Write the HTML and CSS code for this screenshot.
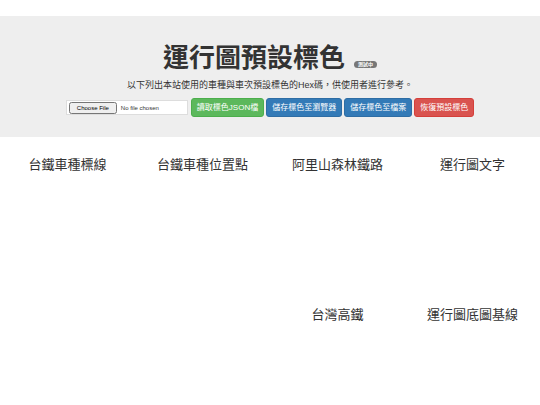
FILE: index.html
```html
<!DOCTYPE html>
<html lang="zh-Hant">
<head>
<meta charset="utf-8">
<title>運行圖預設標色</title>
<link rel="stylesheet" href="styles.css">
</head>
<body>
<div class="topgap"></div>
<header class="jumbotron">
  <h1 class="title">運行圖預設標色<span class="badge">測試中</span></h1>
  <p class="lead">以下列出本站使用的車種與車次預設標色的Hex碼，供使用者進行參考。</p>
  <div class="actions">
    <label class="file-box"><input type="file" class="file-input"></label>
    <button class="btn btn-green">讀取標色JSON檔</button>
    <button class="btn btn-blue">儲存標色至瀏覽器</button>
    <button class="btn btn-blue">儲存標色至檔案</button>
    <button class="btn btn-red">恢復預設標色</button>
  </div>
</header>
<main class="grid">
  <h2 class="col-title c1">台鐵車種標線</h2>
  <h2 class="col-title c2">台鐵車種位置點</h2>
  <h2 class="col-title c3">阿里山森林鐵路</h2>
  <h2 class="col-title c4">運行圖文字</h2>
  <h2 class="col-title c3 r2">台灣高鐵</h2>
  <h2 class="col-title c4 r2">運行圖底圖基線</h2>
</main>
</body>
</html>
```
FILE: styles.css
```css
html, body {
  margin: 0;
  padding: 0;
  background: #fff;
  color: #333;
  font-family: "Liberation Sans", "Noto Sans CJK TC", sans-serif;
}
.topgap { height: 16px; }
.jumbotron {
  background: #eeeeee;
  padding: 26px 0 20px;
  text-align: center;
}
.title {
  margin: 0;
  font-size: 26px;
  line-height: 32px;
  font-weight: 700;
  color: #333;
}
.badge {
  display: inline-block;
  vertical-align: 1px;
  margin-left: 9px;
  background: #777;
  color: #fff;
  font-size: 5px;
  line-height: 7px;
  padding: 0 4px;
  border-radius: 4px;
  font-weight: 700;
}
.lead {
  margin: 5px 0 0;
  font-size: 9px;
  line-height: 12px;
}
.actions {
  margin-top: 7px;
  display: flex;
  justify-content: center;
  align-items: center;
  gap: 2px;
}
.file-box {
  display: flex;
  align-items: center;
  width: 120px;
  height: 13px;
  background: #fff;
  border: 1px solid #ddd;
  margin-right: 1px;
  overflow: hidden;
}
.file-input {
  font-size: 6px;
  font-family: "Liberation Sans", sans-serif;
  margin-left: 2px;
  width: 118px;
}
.btn {
  height: 19px;
  border: 1px solid transparent;
  border-radius: 3px;
  color: #fff;
  font-size: 8px;
  font-family: "Liberation Sans", "Noto Sans CJK TC", sans-serif;
  padding: 0 5px;
  line-height: 17px;
  white-space: nowrap;
}
.btn-green { background: #5cb85c; border-color: #4cae4c; }
.btn-blue { background: #337ab7; border-color: #2e6da4; }
.btn-red { background: #d9534f; border-color: #d43f3a; }
.grid {
  display: grid;
  grid-template-columns: repeat(4, 135px);
  grid-template-rows: 150px auto;
  margin-top: 19px;
}
.col-title {
  margin: 0;
  text-align: center;
  font-size: 13px;
  line-height: 18px;
  font-weight: 400;
  color: #333;
}
.c1 { grid-column: 1; }
.c2 { grid-column: 2; }
.c3 { grid-column: 3; }
.c4 { grid-column: 4; }
.r2 { grid-row: 2; }
```
